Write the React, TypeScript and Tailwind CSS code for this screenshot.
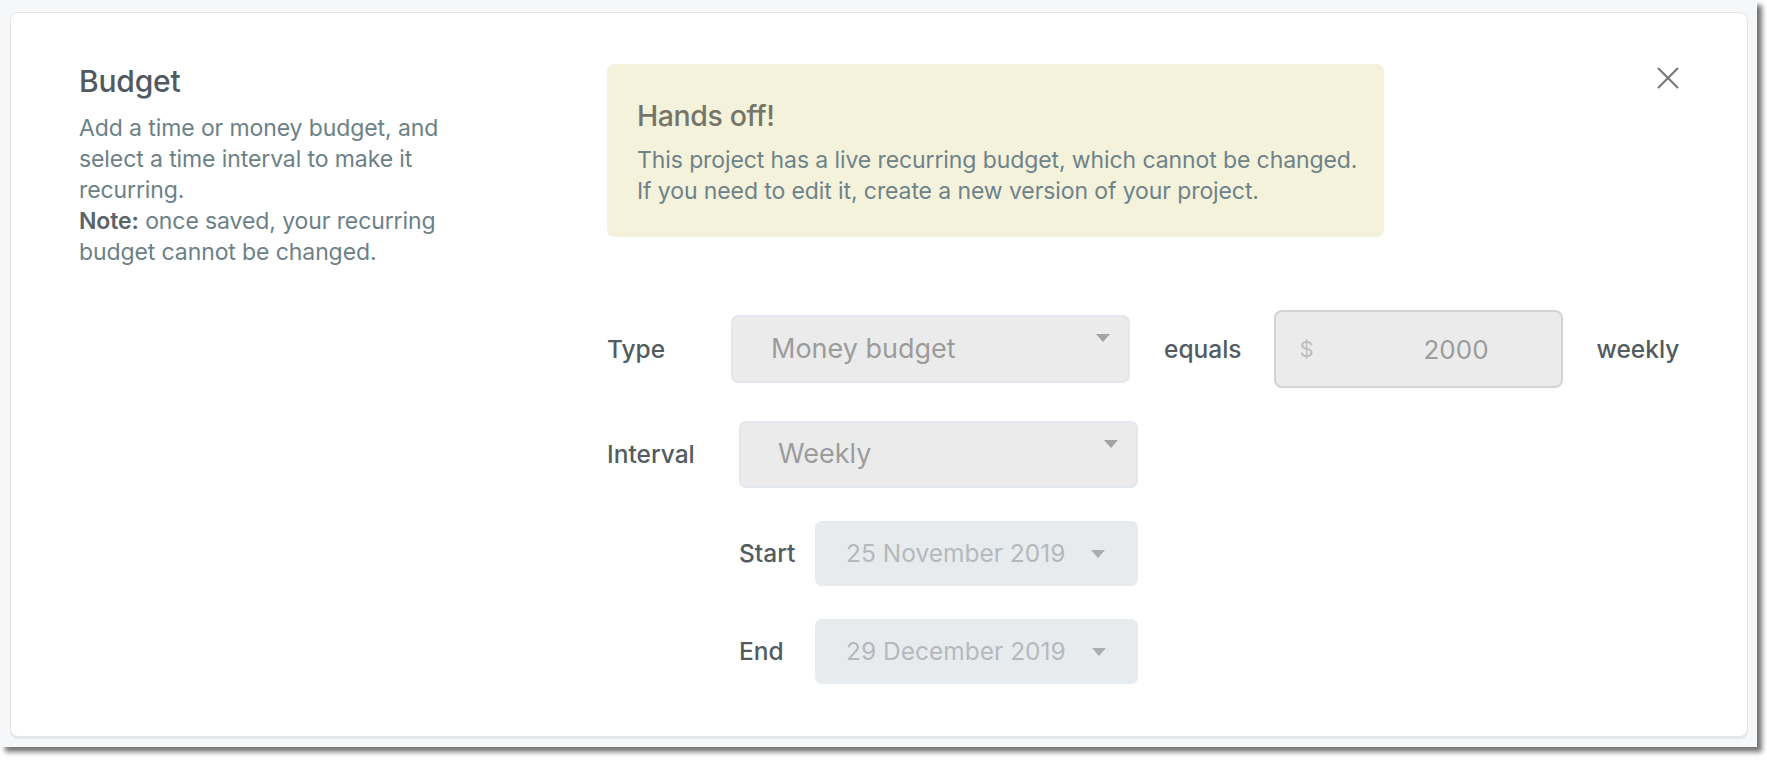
import React from "react";

function Caret({ className }: { className: string }) {
  return (
    <svg width="14" height="8" viewBox="0 0 14 8" className={className}>
      <path d="M0 0 L14 0 L7 8 Z" fill="currentColor" />
    </svg>
  );
}

export default function App() {
  const font = { fontFamily: "Inter, 'Noto Sans', sans-serif" };
  return (
    <div className="w-[1767px] h-[760px] bg-white" style={font}>
      <div className="w-[1757px] h-[747px] bg-[#f6f7f9] pl-[10px] pt-[12px] pr-[9px] pb-[10px] shadow-[5px_5px_5px_rgba(0,0,0,0.55)]">
        <div className="relative h-full bg-white border border-[#e3e4e6] rounded-[8px] shadow-[0_2px_0_#e6e7e9] flex pt-[51px]">
          <div className="w-[596px] pl-[68px] shrink-0">
            <h1 className="text-[30px] leading-[34px] font-medium text-[#515a5f] tracking-[-0.2px]">Budget</h1>
            <div className="mt-[15px] text-[23px] leading-[31px] text-[#6b8187] tracking-[-0.1px]">
              <div>Add a time or money budget, and</div>
              <div>select a time interval to make it</div>
              <div>recurring.</div>
              <div>
                <span className="font-semibold text-[#59646a]">Note:</span> once saved, your recurring
              </div>
              <div>budget cannot be changed.</div>
            </div>
          </div>

          <div className="flex flex-col">
            <div className="w-[777px] h-[173px] bg-[#f5f2dc] rounded-[7px] pl-[30px] pt-[36px]">
              <div className="text-[28.5px] leading-[32px] font-medium text-[#75766a] tracking-[-0.4px]">Hands off!</div>
              <div className="mt-[13px] text-[23px] leading-[31px] text-[#6d8389] tracking-[-0.1px]">
                <div>This project has a live recurring budget, which cannot be changed.</div>
                <div>If you need to edit it, create a new version of your project.</div>
              </div>
            </div>

            <div className="mt-[73px] flex items-center h-[78px] text-[24.5px] font-medium text-[#525c61]">
              <div className="w-[124px]">Type</div>
              <div className="relative w-[399px] h-[68px] bg-[#ebebeb] border-2 border-[#e3e8ee] rounded-[7px] flex items-center pl-[38px] text-[27px] font-normal text-[#9c9c9c]">
                Money budget
                <Caret className="absolute right-[18px] top-[17px] text-[#a3a3a3]" />
              </div>
              <div className="ml-[34px]">equals</div>
              <div className="ml-[32px] w-[289px] h-[78px] bg-[#ebebeb] border-2 border-[#d3d3d3] rounded-[8px] flex items-center pl-[24px] pr-[72px] justify-between">
                <span className="text-[22px] font-normal text-[#bdbdbd]">$</span>
                <span className="text-[26px] font-normal text-[#9c9c9c]">2000</span>
              </div>
              <div className="ml-[34px]">weekly</div>
            </div>

            <div className="mt-[33px] flex items-center h-[67px] text-[24.5px] font-medium text-[#525c61]">
              <div className="w-[132px]">Interval</div>
              <div className="relative w-[399px] h-[67px] bg-[#ebebeb] border-2 border-[#e3e8ee] rounded-[7px] flex items-center pl-[37px] text-[27px] font-normal text-[#9c9c9c]">
                Weekly
                <Caret className="absolute right-[18px] top-[17px] text-[#a3a3a3]" />
              </div>
            </div>

            <div className="mt-[33px] flex items-center h-[65px] text-[24.5px] font-medium text-[#525c61] pl-[132px]">
              <div className="w-[76px]">Start</div>
              <div className="w-[323px] h-[65px] bg-[#e8ebee] rounded-[7px] flex items-center pl-[31px] text-[24.5px] font-normal text-[#b5b9bc]">
                <span>25 November 2019</span>
                <Caret className="ml-[26px] text-[#a9adb1]" />
              </div>
            </div>

            <div className="mt-[33px] flex items-center h-[65px] text-[24.5px] font-medium text-[#525c61] pl-[132px]">
              <div className="w-[76px]">End</div>
              <div className="w-[323px] h-[65px] bg-[#e8ebee] rounded-[7px] flex items-center pl-[31px] text-[24.5px] font-normal text-[#b5b9bc]">
                <span>29 December 2019</span>
                <Caret className="ml-[26px] text-[#a9adb1]" />
              </div>
            </div>
          </div>

          <button className="absolute right-[67px] top-[53px] w-[24px] h-[24px] text-[#7a7a7a]" aria-label="Close">
            <svg width="24" height="24" viewBox="0 0 24 24">
              <path d="M2 2 L22 22 M22 2 L2 22" stroke="currentColor" strokeWidth="2.2" />
            </svg>
          </button>
        </div>
      </div>
    </div>
  );
}
